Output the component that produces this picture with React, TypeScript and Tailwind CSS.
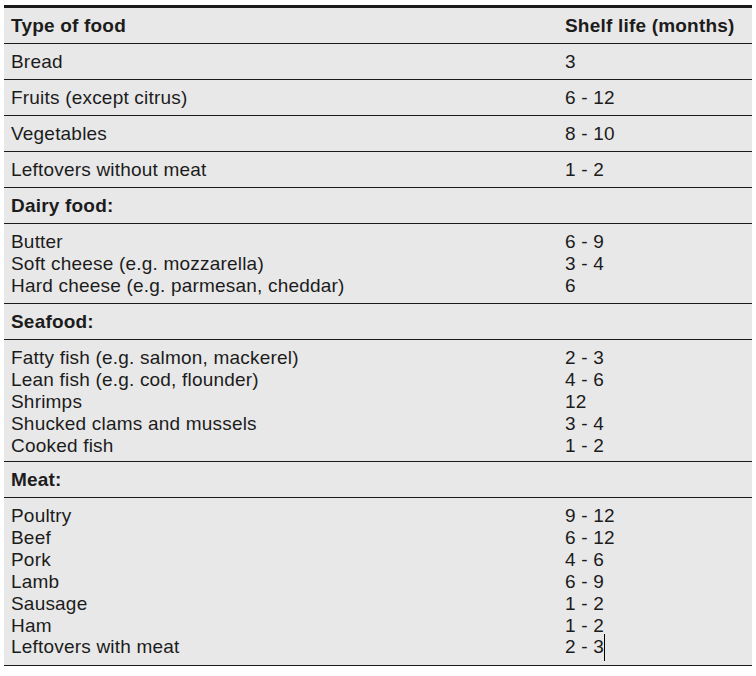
import React from "react";

type Row =
  | { kind: "single"; a: string; b: string; bold?: boolean }
  | { kind: "multi"; items: [string, string][]; h: string };

const rows: Row[] = [
  { kind: "single", a: "Type of food", b: "Shelf life (months)", bold: true },
  { kind: "single", a: "Bread", b: "3" },
  { kind: "single", a: "Fruits (except citrus)", b: "6 - 12" },
  { kind: "single", a: "Vegetables", b: "8 - 10" },
  { kind: "single", a: "Leftovers without meat", b: "1 - 2" },
  { kind: "single", a: "Dairy food:", b: "", bold: true },
  {
    kind: "multi",
    h: "h-[80px]",
    items: [
      ["Butter", "6 - 9"],
      ["Soft cheese (e.g. mozzarella)", "3 - 4"],
      ["Hard cheese (e.g. parmesan, cheddar)", "6"],
    ],
  },
  { kind: "single", a: "Seafood:", b: "", bold: true },
  {
    kind: "multi",
    h: "h-[122px]",
    items: [
      ["Fatty fish (e.g. salmon, mackerel)", "2 - 3"],
      ["Lean fish (e.g. cod, flounder)", "4 - 6"],
      ["Shrimps", "12"],
      ["Shucked clams and mussels", "3 - 4"],
      ["Cooked fish", "1 - 2"],
    ],
  },
  { kind: "single", a: "Meat:", b: "", bold: true },
  {
    kind: "multi",
    h: "h-[168px]",
    items: [
      ["Poultry", "9 - 12"],
      ["Beef", "6 - 12"],
      ["Pork", "4 - 6"],
      ["Lamb", "6 - 9"],
      ["Sausage", "1 - 2"],
      ["Ham", "1 - 2"],
      ["Leftovers with meat", "2 - 3"],
    ],
  },
];

export default function App() {
  return (
    <div
      className="w-[756px] h-[676px] bg-white pl-[4px] pt-[5px] text-[#1c1c1c] text-[19px] tracking-[0.2px]"
      style={{ fontFamily: '"Liberation Sans", Arial, sans-serif' }}
    >
      <div className="w-[748px] bg-[#e8e8e8] border-t-[3px] border-[#1a1a1a]">
        {rows.map((r, i) => {
          if (r.kind === "single") {
            return (
              <div
                key={i}
                className={`grid grid-cols-[554px_1fr] h-[36px] box-border border-b border-[#1a1a1a] items-center ${
                  r.bold ? "font-bold" : ""
                }`}
              >
                <div className="pl-[7px] leading-[22px]">{r.a}</div>
                <div className="pl-[7px] leading-[22px]">{r.b}</div>
              </div>
            );
          }
          const last = i === rows.length - 1;
          return (
            <div
              key={i}
              className={`grid grid-cols-[554px_1fr] ${r.h} box-border border-b-[1.5px] border-[#1a1a1a] pt-[7px] content-start leading-[21.9px]`}
            >
              <div className="pl-[7px]">
                {r.items.map(([a], j) => (
                  <div key={j}>{a}</div>
                ))}
              </div>
              <div className="pl-[7px]">
                {r.items.map(([, b], j) => (
                  <div key={j}>
                    <span className="relative">
                      {b}
                      {last && j === r.items.length - 1 ? (
                        <span className="absolute right-[-1px] top-[-2px] w-px h-[27px] bg-black" />
                      ) : null}
                    </span>
                  </div>
                ))}
              </div>
            </div>
          );
        })}
      </div>
    </div>
  );
}
